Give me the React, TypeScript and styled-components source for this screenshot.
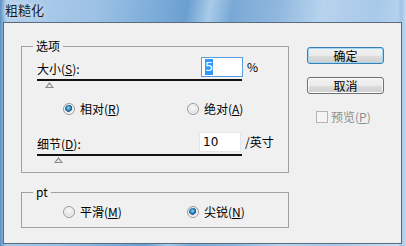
import styled, { createGlobalStyle } from 'styled-components'

const GlobalStyle = createGlobalStyle`
	html, body {
		margin: 0;
		padding: 0;
	}

	body {
		font-family: "Noto Sans CJK SC", "Noto Sans", sans-serif;
		font-size: 12px;
		color: #000;
	}
`

export default function App() {
	return (
		<>
			<GlobalStyle />
			<Window>
				<TitleBar>粗糙化</TitleBar>

				<Client>
					<LeftColumn>
						<GroupBox height={127}>
							<Legend>选项</Legend>

							<FieldRow top={10} labelWidth={164}>
								<Label>大小(<u>S</u>):</Label>
								<NumberInput focused>
									<Selection>5</Selection>
								</NumberInput>
								<Unit>%</Unit>
							</FieldRow>
							<Slider thumbLeft={8} />

							<RadioRow top={14}>
								<RadioOption>
									<Radio checked />
									<span>相对(<u>R</u>)</span>
								</RadioOption>
								<RadioOption>
									<Radio />
									<span>绝对(<u>A</u>)</span>
								</RadioOption>
							</RadioRow>

							<FieldRow top={16} labelWidth={162}>
								<Label>细节(<u>D</u>):</Label>
								<NumberInput>10</NumberInput>
								<Unit>/英寸</Unit>
							</FieldRow>
							<Slider thumbLeft={17} />
						</GroupBox>

						<GroupBox height={36}>
							<Legend>pt</Legend>

							<RadioRow top={12}>
								<RadioOption>
									<Radio />
									<span>平滑(<u>M</u>)</span>
								</RadioOption>
								<RadioOption>
									<Radio checked />
									<span>尖锐(<u>N</u>)</span>
								</RadioOption>
							</RadioRow>
						</GroupBox>
					</LeftColumn>

					<RightColumn>
						<Button isDefault>确定</Button>
						<Button>取消</Button>

						<CheckOption>
							<CheckBox />
							<span>预览(<u>P</u>)</span>
						</CheckOption>
					</RightColumn>
				</Client>
			</Window>
		</>
	)
}

const Window = styled.div`
	width: 406px;
	height: 246px;
	box-sizing: border-box;
	padding: 0 4px 2px 3px;
	display: flex;
	flex-direction: column;
	background:
		linear-gradient(90deg, #5d8fc0 0px, #82aed8 3px, transparent 6px, transparent 398px, #9fc3e6 401px, #c3daf0 406px),
		linear-gradient(100deg, #b3d0ec 0%, #9cc1e4 22%, #7eaedb 34%, #6b9fd1 42%, #a9cbe9 47%, #7aa9d6 52%, #8fb7de 62%, #b7d3ee 72%, #a8c9e9 84%, #cfe2f3 100%);
	overflow: hidden;
`

const TitleBar = styled.div`
	height: 22px;
	flex-shrink: 0;
	padding-left: 2px;
	font-size: 13px;
	line-height: 19px;
	color: #1a1a1a;
	text-shadow: 0 0 6px rgba(255, 255, 255, 0.9);
`

const Client = styled.div`
	flex: 1;
	display: flex;
	align-items: flex-start;
	padding: 23px 0 0 17px;
	background-color: #f0f0f0;
	border: 1px solid #5b6b7e;
`

const LeftColumn = styled.div`
	width: 268px;
	display: flex;
	flex-direction: column;
	gap: 19px;
`

const RightColumn = styled.div`
	margin: 1px 0 0 18px;
	width: 77px;
	display: flex;
	flex-direction: column;
	align-items: stretch;
	gap: 13px;
`

const GroupBox = styled.div<{ height: number }>`
	position: relative;
	box-sizing: border-box;
	height: ${({ height }) => height}px;
	border: 1px solid #a0a0a0;
	display: flex;
	flex-direction: column;
	align-items: flex-start;
`

const Legend = styled.span`
	position: absolute;
	top: -8px;
	left: 11px;
	padding: 0 3px;
	line-height: 14px;
	background-color: #f0f0f0;
`

const FieldRow = styled.div<{ top: number; labelWidth: number }>`
	margin: ${({ top }) => top}px 0 0 15px;
	height: 20px;
	display: flex;
	align-items: center;

	& > span:first-child {
		width: ${({ labelWidth }) => labelWidth}px;
	}
`

const Label = styled.span`
	line-height: 14px;
	padding-top: 3px;
`

const NumberInput = styled.div<{ focused?: boolean }>`
	box-sizing: border-box;
	width: 42px;
	height: 20px;
	padding: 0 3px;
	display: flex;
	align-items: center;
	background-color: #fff;
	border: 1px solid ${({ focused }) => focused ? '#569de5' : '#e3e6ec'};
	font-family: "DejaVu Sans", sans-serif;
	font-size: 12px;
	line-height: 14px;
`

const Selection = styled.span`
	padding: 1px 0;
	background-color: #3399ff;
	color: #fff;
	font-size: 13px;
`

const Unit = styled.span`
	margin-left: 4px;
	line-height: 14px;
`

const Slider = styled.div<{ thumbLeft: number }>`
	position: relative;
	margin: 2px 0 0 15px;
	width: 205px;
	height: 9px;
	border-top: 2px solid #111;
	box-sizing: border-box;

	&::after {
		content: '';
		position: absolute;
		top: 1px;
		left: ${({ thumbLeft }) => thumbLeft}px;
		width: 9px;
		height: 6px;
		background-color: #8a8a8a;
		clip-path: polygon(50% 0, 100% 100%, 0 100%);
	}

	&::before {
		content: '';
		position: absolute;
		top: 3px;
		left: ${({ thumbLeft }) => thumbLeft + 2}px;
		width: 5px;
		height: 3px;
		background-color: #ececec;
		clip-path: polygon(50% 0, 100% 100%, 0 100%);
		z-index: 1;
	}
`

const RadioRow = styled.div<{ top: number }>`
	margin: ${({ top }) => top}px 0 0 41px;
	height: 14px;
	display: flex;
`

const RadioOption = styled.label`
	width: 124px;
	display: flex;
	align-items: center;
	gap: 5px;
	line-height: 14px;
`

const Radio = styled.span<{ checked?: boolean }>`
	box-sizing: border-box;
	width: 12px;
	height: 12px;
	border-radius: 50%;
	border: 1px solid #9a9a9a;
	background: ${({ checked }) => checked
		? 'radial-gradient(circle at 45% 40%, #9fd9f5 0, #2f8cc6 2px, #1a5a8a 3.5px, #e4e4e4 4px, #f6f6f6 6px)'
		: 'radial-gradient(circle at 50% 40%, #fbfbfb 0, #e6e6e6 4px, #d6d6d6 6px)'};
	box-shadow: inset 0 0 0 1px #f8f8f8;
`

const Button = styled.div<{ isDefault?: boolean }>`
	box-sizing: border-box;
	height: 17px;
	display: flex;
	align-items: center;
	justify-content: center;
	border: 1px solid ${({ isDefault }) => isDefault ? '#3c7fb1' : '#707070'};
	border-radius: 3px;
	background: linear-gradient(#f2f2f2 0%, #ebebeb 50%, #dddddd 51%, #cfcfcf 100%);
	box-shadow: inset 0 0 0 1px ${({ isDefault }) => isDefault ? '#9fd9f5' : '#fbfbfb'};
	font-size: 12px;
	line-height: 14px;
`

const CheckOption = styled.label`
	margin: 3px 0 0 9px;
	display: flex;
	align-items: center;
	gap: 3px;
	color: #8d8d8d;
	line-height: 14px;
`

const CheckBox = styled.span`
	box-sizing: border-box;
	width: 12px;
	height: 12px;
	border: 1px solid #b5b5b5;
	background-color: #f4f4f4;
`
